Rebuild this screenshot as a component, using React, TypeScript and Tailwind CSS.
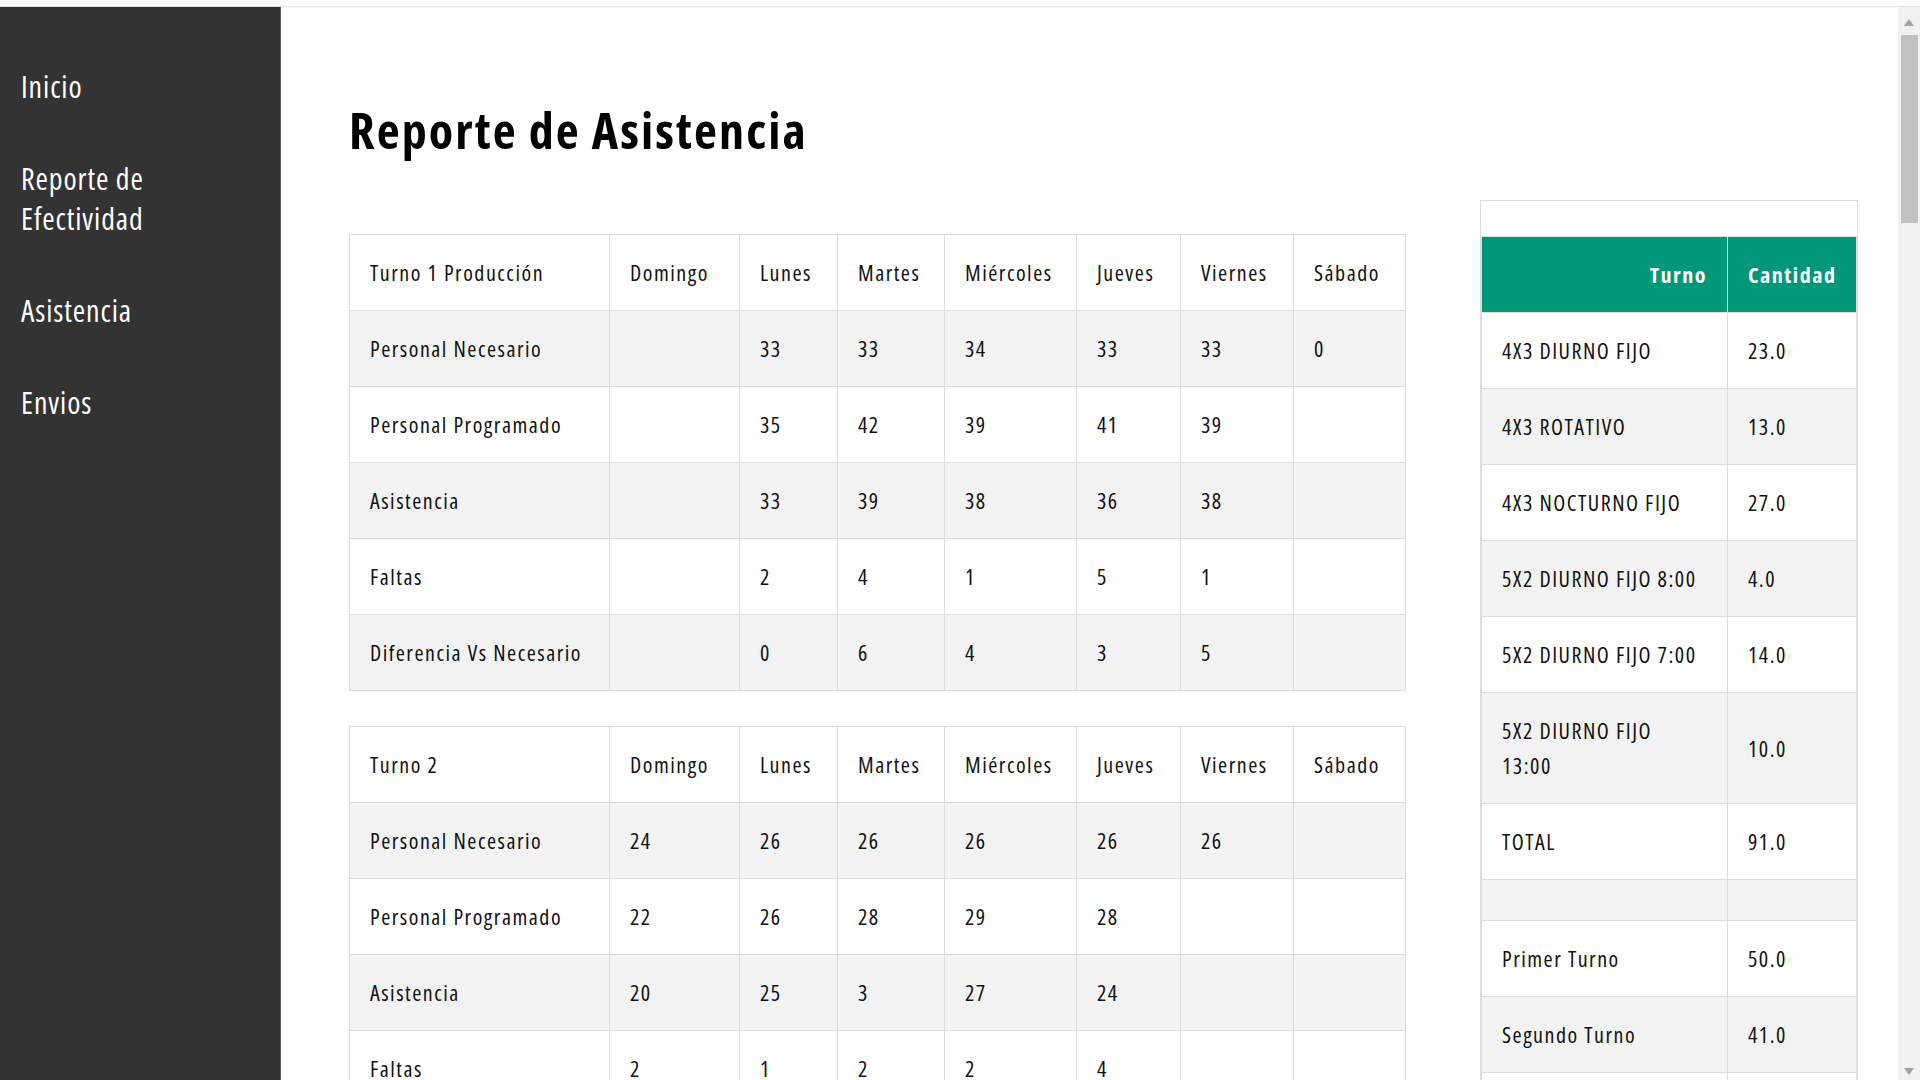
const navItems = ['Inicio', 'Reporte de Efectividad', 'Asistencia', 'Envios']

const days = ['Domingo', 'Lunes', 'Martes', 'Miércoles', 'Jueves', 'Viernes', 'Sábado']
const colWidths = ['w-[260px]', 'w-[130px]', 'w-[98px]', 'w-[107px]', 'w-[132px]', 'w-[104px]', 'w-[113px]', 'w-[112px]']

interface Turno {
  title: string
  rows: [string, ...string[]][]
}

const turnos: Turno[] = [
  {
    title: 'Turno 1 Producción',
    rows: [
      ['Personal Necesario', '', '33', '33', '34', '33', '33', '0'],
      ['Personal Programado', '', '35', '42', '39', '41', '39', ''],
      ['Asistencia', '', '33', '39', '38', '36', '38', ''],
      ['Faltas', '', '2', '4', '1', '5', '1', ''],
      ['Diferencia Vs Necesario', '', '0', '6', '4', '3', '5', ''],
    ],
  },
  {
    title: 'Turno 2',
    rows: [
      ['Personal Necesario', '24', '26', '26', '26', '26', '26', ''],
      ['Personal Programado', '22', '26', '28', '29', '28', '', ''],
      ['Asistencia', '20', '25', '3', '27', '24', '', ''],
      ['Faltas', '2', '1', '2', '2', '4', '', ''],
      ['Diferencia Vs Necesario', '2', '1', '23', '1', '2', '', ''],
    ],
  },
]

const resumen: [string, string][] = [
  ['4X3 DIURNO FIJO', '23.0'],
  ['4X3 ROTATIVO', '13.0'],
  ['4X3 NOCTURNO FIJO', '27.0'],
  ['5X2 DIURNO FIJO 8:00', '4.0'],
  ['5X2 DIURNO FIJO 7:00', '14.0'],
  ['5X2 DIURNO FIJO 13:00', '10.0'],
  ['TOTAL', '91.0'],
  ['', ''],
  ['Primer Turno', '50.0'],
  ['Segundo Turno', '41.0'],
  ['Total Turnos', '91.0'],
]

// narrow face of Open Sans plus a little tracking to get the Segoe-like width
const cell =
  'border border-[#dddddd] px-5 py-5 leading-[35px] text-left align-middle font-normal whitespace-nowrap [font-stretch:condensed] tracking-[1.5px]'

function TurnoTable({ turno }: { turno: Turno }) {
  return (
    <table className="table-fixed border-collapse w-[1056px] text-[22px] text-[#111]">
      <colgroup>
        {colWidths.map((w, i) => (
          <col key={i} className={w} />
        ))}
      </colgroup>
      <tbody>
        <tr className="bg-white">
          <td className={cell}>{turno.title}</td>
          {days.map((d) => (
            <td key={d} className={cell}>
              {d}
            </td>
          ))}
        </tr>
        {turno.rows.map((row, i) => (
          <tr key={i} className={i % 2 === 0 ? 'bg-[#f3f3f3]' : 'bg-white'}>
            {row.map((v, j) => (
              <td key={j} className={cell}>
                {v}
              </td>
            ))}
          </tr>
        ))}
      </tbody>
    </table>
  )
}

function ResumenTable() {
  return (
    <div className="w-[378px] border border-[#dddddd] bg-white">
      <div className="h-[35px]" />
      <table className="table-fixed border-collapse w-full text-[22px] text-[#111]">
        <colgroup>
          <col className="w-[246px]" />
          <col />
        </colgroup>
        <thead>
          <tr className="bg-[#009879] text-white">
            <th className={`${cell} !text-right !font-bold`}>Turno</th>
            <th className={`${cell} !font-bold`}>Cantidad</th>
          </tr>
        </thead>
        <tbody>
          {resumen.map(([t, c], i) => (
            <tr key={i} className={i % 2 === 1 ? 'bg-[#f3f3f3]' : 'bg-white'}>
              <td className={cell}>
                {t === '5X2 DIURNO FIJO 13:00' ? (
                  <>
                    5X2 DIURNO FIJO
                    <br />
                    13:00
                  </>
                ) : (
                  t
                )}
              </td>
              <td className={cell}>{c}</td>
            </tr>
          ))}
        </tbody>
      </table>
    </div>
  )
}

function Scrollbar() {
  return (
    <div className="w-[22px] shrink-0 bg-[#f1f1f1] flex flex-col items-center relative">
      <svg width="10" height="7" viewBox="0 0 10 7" className="mt-[12px]">
        <polygon points="5,0 10,7 0,7" fill="#a3a3a3" />
      </svg>
      <div className="mt-[9px] ml-[1px] w-[17px] h-[188px] bg-[#c1c1c1]" />
      <svg width="10" height="7" viewBox="0 0 10 7" className="absolute bottom-[5px] left-[6px]">
        <polygon points="0,0 10,0 5,7" fill="#a3a3a3" />
      </svg>
    </div>
  )
}

export default function App() {
  return (
    <div className="h-screen w-full overflow-hidden bg-white flex flex-col font-['Open_Sans',sans-serif]">
      <div className="h-[7px] shrink-0 border-b border-[#e3e3e3]" />
      <div className="flex flex-1 min-h-0">
        <aside className="w-[281px] shrink-0 bg-[#333333] border-r border-[#5c5c5c] pt-[34px]">
          <nav className="flex flex-col">
            {navItems.map((item) => (
              <a
                key={item}
                href="#"
                className="block pl-[21px] pr-5 py-[26px] text-[30px] leading-[40px] text-white [font-stretch:condensed] tracking-[0.9px] w-[220px]"
              >
                {item}
              </a>
            ))}
          </nav>
        </aside>
        <main className="flex-1 min-w-0 pl-[68px] pt-[93px]">
          <h1 className="text-[50px] leading-[60px] font-bold text-black [font-stretch:condensed] tracking-[2.1px]">
            Reporte de Asistencia
          </h1>
          <div className="flex items-start gap-[74px]">
            <div className="mt-[74px] flex flex-col gap-[35px]">
              {turnos.map((t) => (
                <TurnoTable key={t.title} turno={t} />
              ))}
            </div>
            <div className="mt-[40px]">
              <ResumenTable />
            </div>
          </div>
        </main>
        <Scrollbar />
      </div>
    </div>
  )
}
